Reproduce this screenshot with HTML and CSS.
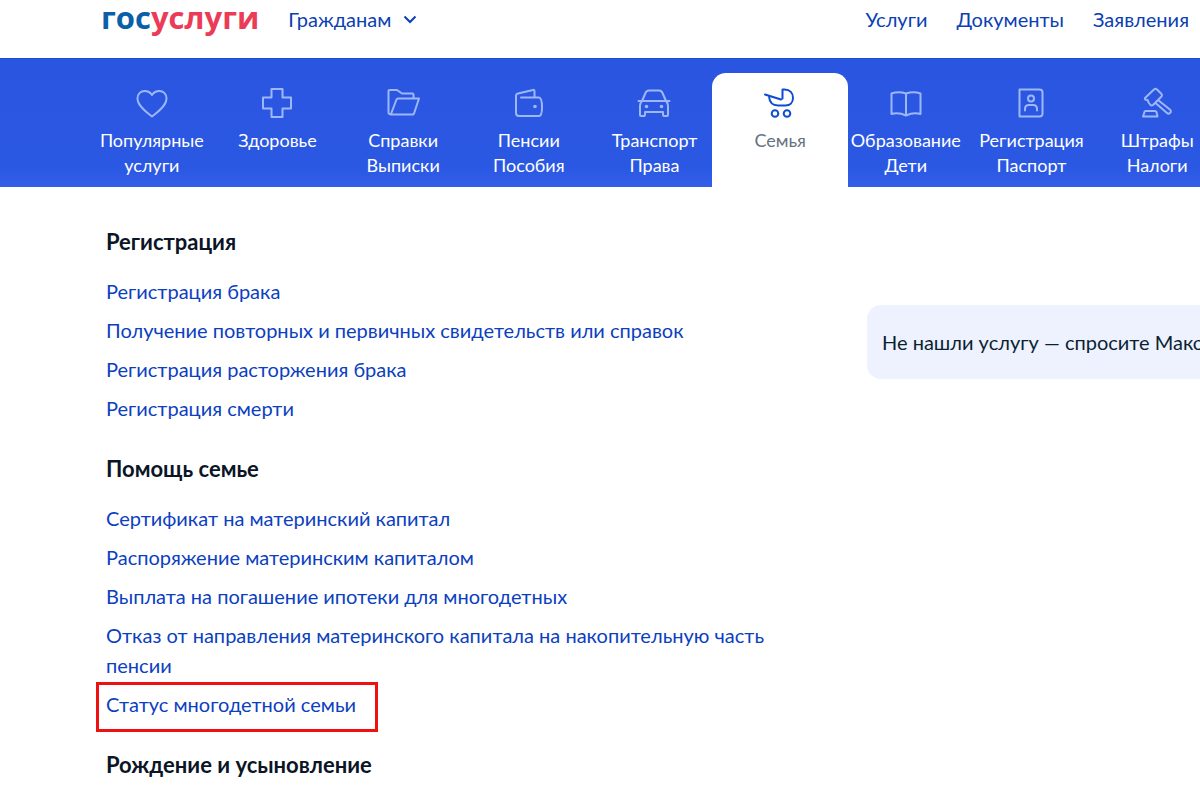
FILE: index.html
```html
<!DOCTYPE html>
<html lang="ru">
<head>
<meta charset="utf-8">
<meta name="viewport" content="width=device-width, initial-scale=1">
<title>Госуслуги — Семья</title>
<link rel="stylesheet" href="styles.css">
</head>
<body>
<header class="header">
  <a class="logo" href="#"><span class="logo-blue">гос</span><span class="logo-red">услуги</span></a>
  <button class="audience" type="button">Гражданам
    <svg width="14" height="9" viewBox="0 0 14 9" aria-hidden="true"><path d="M1.500 1.500l5.500 5.500 5.500-5.500"/></svg>
  </button>
  <nav class="top-links">
    <a href="#">Услуги</a>
    <a href="#">Документы</a>
    <a href="#">Заявления</a>
  </nav>
</header>

<nav class="categories">
  <div class="category-grid">
    <a class="category" href="#">
      <svg class="icon" viewBox="0 0 36 36"><path d="M18 31.500C12 27 3.500 20.500 3.500 13.500C3.500 8.500 7 6 10.500 6C14 6 16.500 7.500 18 10C19.500 7.500 22 6 25.500 6C29 6 32.500 8.500 32.500 13.500C32.500 20.500 24 27 18 31.500Z"/></svg>
      <span>Популярные<br>услуги</span>
    </a>
    <a class="category" href="#">
      <svg class="icon" viewBox="0 0 36 36"><path d="M12.500 4H23.500V12.500H32V23.500H23.500V32H12.500V23.500H4V12.500H12.500Z"/></svg>
      <span>Здоровье</span>
    </a>
    <a class="category" href="#">
      <svg class="icon" viewBox="0 0 36 36"><path d="M5.500 29.500H27.500Q28.500 29.500 29 28.500L34 13.500H13Q12 13.500 11.500 14.500L6 29Q3.500 29.500 3.500 27.500V6Q3.500 5 4.500 5H12L17 8.500H27.500Q28.500 8.500 28.500 9.500V13.500"/></svg>
      <span>Справки<br>Выписки</span>
    </a>
    <a class="category" href="#">
      <svg class="icon" viewBox="0 0 36 36"><path d="M10 12.500H28Q31 13 31 22Q31 31 28 31H8Q5 31 5 28V11Q5 9 7 8.500L22 5Q23.500 4.500 23.500 6V12.500"/><circle class="dot" cx="24" cy="21.500" r="1.800"/></svg>
      <span>Пенсии<br>Пособия</span>
    </a>
    <a class="category" href="#">
      <svg class="icon" viewBox="0 0 36 36"><path d="M2.500 16H33.500M6 16L9.500 8Q10.500 5.500 13 5.500H23Q25.500 5.500 26.500 8L30 16Q32 18 32 21V30Q32 31 31 31H28Q27 31 27 30V27H9V30Q9 31 8 31H5Q4 31 4 30V21Q4 18 6 16"/><circle class="dot" cx="10.500" cy="21.500" r="1.800"/><circle class="dot" cx="25.500" cy="21.500" r="1.800"/></svg>
      <span>Транспорт<br>Права</span>
    </a>
    <a class="category category-active" href="#" aria-current="page">
      <svg class="icon" viewBox="0 0 36 36"><path d="M3 9.500L19 14.500L20.500 13.500V4.500H22.500C28 4.500 31 8 31 13C31 17.500 28 20.500 23.500 20.500H16C10.500 20.500 7.500 17 7 11.500"/><circle cx="13" cy="28.500" r="3.300"/><circle cx="25" cy="28.500" r="3.300"/></svg>
      <span>Семья</span>
    </a>
    <a class="category" href="#">
      <svg class="icon" viewBox="0 0 36 36"><path d="M18 8.500Q10.500 6 3.500 8.500V29Q10.500 27 18 30.500Q25.500 27 32.500 29V8.500Q25.500 6 18 8.500V30.500"/></svg>
      <span>Образование<br>Дети</span>
    </a>
    <a class="category" href="#">
      <svg class="icon" viewBox="0 0 36 36"><path d="M6.500 4.500H26.500Q29.500 4.500 29.500 7.500V28.500Q29.500 31.500 26.500 31.500H6.500ZM12 25.500V24Q12 20 16 20H20Q24 20 24 24V25.500"/><circle cx="18" cy="13.500" r="3"/></svg>
      <span>Регистрация<br>Паспорт</span>
    </a>
    <a class="category" href="#">
      <svg class="icon" viewBox="0 0 36 36"><path d="M6 13L15 4.500Q16.500 3 18 4.500L22.500 9Q23.500 10 22.500 11.500L14 20Q12.500 21 11.500 20L9.500 17.500L9 15.500L6.500 14.500Q5.500 14 6 13M19 15L31.500 25Q32.500 26.500 31 28Q29.500 29.500 28 28L16.500 18M6.500 26H16Q17 26 17.500 27L18.500 31.500H4L5.500 27Q5.500 26 6.500 26"/></svg>
      <span>Штрафы<br>Налоги</span>
    </a>
  </div>
</nav>

<main class="panel">
  <div class="services">
    <section class="group">
      <h2>Регистрация</h2>
      <ul>
        <li><a href="#">Регистрация брака</a></li>
        <li><a href="#">Получение повторных и первичных свидетельств или справок</a></li>
        <li><a href="#">Регистрация расторжения брака</a></li>
        <li><a href="#">Регистрация смерти</a></li>
      </ul>
    </section>
    <section class="group">
      <h2>Помощь семье</h2>
      <ul>
        <li><a href="#">Сертификат на материнский капитал</a></li>
        <li><a href="#">Распоряжение материнским капиталом</a></li>
        <li><a href="#">Выплата на погашение ипотеки для многодетных</a></li>
        <li><a href="#">Отказ от направления материнского капитала на накопительную часть пенсии</a></li>
        <li><a class="highlight" href="#">Статус многодетной семьи</a></li>
      </ul>
    </section>
    <section class="group">
      <h2>Рождение и усыновление</h2>
    </section>
  </div>
  <aside class="ask">Не нашли услугу — спросите Макса</aside>
</main>
</body>
</html>
```
FILE: styles.css
```css
* { box-sizing: border-box; }
body {
  margin: 0;
  background: #fff;
  color: #0b1f33;
  font: 20px/30px Lato, "Open Sans", sans-serif;
  overflow: hidden;
}
a { color: #0b40c0; text-decoration: none; }

.header {
  display: flex;
  align-items: center;
  height: 58px;
  padding: 0 11px 20px 101px;
}
.logo {
  margin: 0 29px 4px 0;
  font: 700 31px/40px "Open Sans", sans-serif;
}
.logo-blue { color: #0b5fa8; }
.logo-red { color: #ec3b56; }
.audience {
  display: flex;
  align-items: center;
  gap: 12px;
  padding: 0;
  border: 0;
  background: none;
  color: #0b40b3;
  font: inherit;
}
.audience svg { fill: none; stroke: currentColor; stroke-width: 2; }
.top-links { display: flex; gap: 29px; margin-left: auto; }
.top-links a { color: #0b40b3; }

.categories {
  padding: 14px 0 0 89px;
  background: linear-gradient(#2a55e0, #2b58e3 85%, #335fe8);
  border-top: 1px solid #1d4fd0;
  overflow: hidden;
}
.category-grid {
  display: grid;
  grid-template-columns: repeat(9, 1fr);
  margin-right: -20px;
}
.categories .category {
  display: flex;
  flex-direction: column;
  align-items: center;
  min-height: 114px;
  padding-top: 12px;
  color: #fff;
  font-size: 18px;
  line-height: 25px;
  text-align: center;
}
.icon {
  width: 36px;
  height: 36px;
  margin-bottom: 7px;
  fill: none;
  stroke: #9db7f8;
  stroke-width: 2;
  stroke-linejoin: round;
  stroke-linecap: round;
}
.dot { fill: #9db7f8; stroke: none; }
.categories .category-active {
  margin: 0 -5px;
  border-radius: 14px 14px 0 0;
  background: #fff;
  color: #66727f;
}
.category-active .icon { stroke: #0d4cd3; }

.panel {
  display: grid;
  grid-template-columns: 700px auto;
  gap: 61px;
  align-items: start;
  padding: 40px 0 20px 106px;
}
.group { margin-bottom: 31px; }
.group h2 {
  margin: 0 0 19px;
  color: #0b1526;
  font-size: 22px;
  line-height: 30px;
}
.group ul {
  display: grid;
  gap: 9px;
  margin: 0;
  padding: 0;
  list-style: none;
}
.highlight { position: relative; }
.highlight::after {
  content: "";
  position: absolute;
  inset: -10px -22px -16px -10px;
  border: 3px solid #ee1111;
}
.ask {
  margin-top: 78px;
  padding: 22px 15px;
  border-radius: 14px 0 0 14px;
  background: #edf2fe;
  white-space: nowrap;
}
```
